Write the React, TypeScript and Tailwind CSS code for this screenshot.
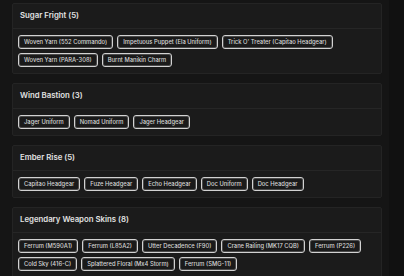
import React from 'react';

type Group = { title: string; items: string[] };

const GROUPS: Group[] = [
  {
    title: 'Sugar Fright (5)',
    items: [
      'Woven Yarn (552 Commando)',
      'Impetuous Puppet (Ela Uniform)',
      "Trick O' Treater (Capitao Headgear)",
      'Woven Yarn (PARA-308)',
      'Burnt Manikin Charm',
    ],
  },
  {
    title: 'Wind Bastion (3)',
    items: ['Jager Uniform', 'Nomad Uniform', 'Jager Headgear'],
  },
  {
    title: 'Ember Rise (5)',
    items: ['Capitao Headgear', 'Fuze Headgear', 'Echo Headgear', 'Doc Uniform', 'Doc Headgear'],
  },
  {
    title: 'Legendary Weapon Skins (8)',
    items: [
      'Ferrum (M590A1)',
      'Ferrum (L85A2)',
      'Utter Decadence (F90)',
      'Crane Railing (MK17 CQB)',
      'Ferrum (P226)',
      'Cold Sky (416-C)',
      'Splattered Floral (Mx4 Storm)',
      'Ferrum (SMG-11)',
    ],
  },
];

function Chip({ label }: { label: string }) {
  return (
    <span className="h-[14px] flex items-center px-[5px] rounded-[3px] border border-[#d2d2d2] bg-[#1a1a1a] shadow-[inset_0_0_0_1px_#4a4a4a] text-[5.8px] font-medium leading-none text-[#d6d6d6] whitespace-nowrap">
      {label}
    </span>
  );
}

export default function App() {
  return (
    <div className="w-[404px] h-[276px] overflow-hidden bg-[#111111] flex" style={{ fontFamily: 'Inter, "Noto Sans", sans-serif' }}>
      <div className="w-[389px] bg-[#151515] pl-[12px] pr-[7px] pt-[3px] flex flex-col gap-[9px]">
        {GROUPS.map(g => (
          <div key={g.title} className="bg-[#1b1b1b] border border-[#242424] rounded-[2px]">
            {/* Header */}
            <div className="h-[25px] flex items-center px-[7px] border-b border-[#262626]">
              <h2 className="text-[7.8px] font-semibold text-[#e2e2e2]">{g.title}</h2>
            </div>
            {/* Chips */}
            <div className="flex flex-wrap gap-[4px] px-[5px] py-[6px]">
              {g.items.map(i => (
                <Chip key={i} label={i} />
              ))}
            </div>
          </div>
        ))}
      </div>
    </div>
  );
}
